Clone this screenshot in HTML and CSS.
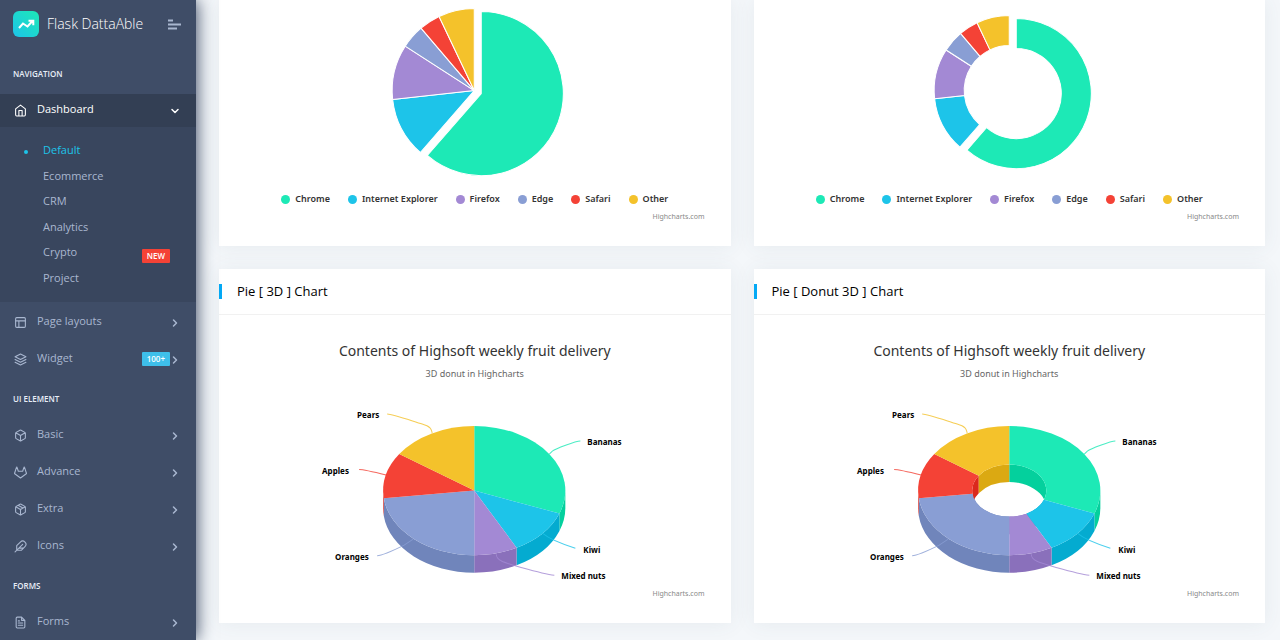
FILE: index.html
```html
<!DOCTYPE html>
<html lang="en">
<head>
<meta charset="utf-8">
<title>Flask DattaAble</title>
<link rel="stylesheet" href="styles.css">
</head>
<body>
<svg class="defs" aria-hidden="true">
  <symbol id="chev" viewBox="0 0 24 24"><path d="M9 18l6-6-6-6"/></symbol>
  <symbol id="down" viewBox="0 0 24 24"><path d="M6 9l6 6 6-6"/></symbol>
  <symbol id="home" viewBox="0 0 24 24"><path d="M3 9l9-7 9 7v11a2 2 0 0 1-2 2H5a2 2 0 0 1-2-2zM9 22V12h6v10"/></symbol>
  <symbol id="layout" viewBox="0 0 24 24"><rect x="3" y="3" width="18" height="18" rx="2"/><path d="M3 9h18M9 21V9"/></symbol>
  <symbol id="layers" viewBox="0 0 24 24"><path d="M12 2L2 7l10 5 10-5zM2 17l10 5 10-5M2 12l10 5 10-5"/></symbol>
  <symbol id="box" viewBox="0 0 24 24"><path d="M21 16V8a2 2 0 0 0-1-1.73l-7-4a2 2 0 0 0-2 0l-7 4A2 2 0 0 0 3 8v8a2 2 0 0 0 1 1.73l7 4a2 2 0 0 0 2 0l7-4A2 2 0 0 0 21 16zM3.3 7L12 12l8.700-5M12 22V12"/></symbol>
  <symbol id="gitlab" viewBox="0 0 24 24"><path d="M22.650 14.390L12 22.130 1.350 14.390a.84.84 0 0 1-.3-.94l1.220-3.780 2.440-7.510a.42.42 0 0 1 .82 0l2.440 7.490h8.060l2.440-7.490a.42.42 0 0 1 .82 0l2.440 7.510L23 13.450a.84.84 0 0 1-.35.940z"/></symbol>
  <symbol id="package" viewBox="0 0 24 24"><path d="M16.500 9.400L7.500 4.200M21 16V8a2 2 0 0 0-1-1.730l-7-4a2 2 0 0 0-2 0l-7 4A2 2 0 0 0 3 8v8a2 2 0 0 0 1 1.730l7 4a2 2 0 0 0 2 0l7-4A2 2 0 0 0 21 16zM3.300 7L12 12l8.700-5M12 22V12"/></symbol>
  <symbol id="feather" viewBox="0 0 24 24"><path d="M20.240 12.240a6 6 0 0 0-8.490-8.490L5 10.500V19h8.500zM16 8L2 22M17.500 15H9"/></symbol>
  <symbol id="file" viewBox="0 0 24 24"><path d="M14 2H6a2 2 0 0 0-2 2v16a2 2 0 0 0 2 2h12a2 2 0 0 0 2-2V8zM14 2v6h6M16 13H8M16 17H8M10 9H8"/></symbol>
  <symbol id="links" viewBox="237 400 475 187">
    <path stroke="#f4c22b" d="M387 414C392 414 412 421 422 424S431 430 432 433"/>
    <path stroke="#1de9b6" d="M580 441C575 441 555 449 552 451L549 454"/>
    <path stroke="#f44236" d="M359 469.500C364 469.500 378 473 386 475"/>
    <path stroke="#899ed4" d="M377 555.500C382 555.500 398 548 404 545L413 539"/>
    <path stroke="#1dc4e9" d="M542 533C548 538 562 544 575 548"/>
    <path stroke="#a389d4" d="M496 554C496 560 502 562 520 567S545 574 554 575"/>
  </symbol>
</svg>

<aside class="sidebar">
  <header class="brand">
    <a class="brand-link" href="#">
      <svg class="logo" viewBox="0 0 26 26"><defs><linearGradient id="lg" x1="0" y1="1" x2="1" y2="0"><stop offset="0" stop-color="#1dc4e9"/><stop offset="1" stop-color="#1de9b6"/></linearGradient></defs><rect width="26" height="26" rx="6" fill="url(#lg)"/><path d="M6 17l4-4.500 4.500 3 5.500-6M15.500 9.800h4.800v4.400" fill="none" stroke="#fff" stroke-width="2"/></svg>
      <span>Flask DattaAble</span>
    </a>
    <button class="toggle" aria-label="Toggle menu"><svg viewBox="0 0 13 11"><path d="M0 1.500h5M0 5.500h13M0 9.500h9"/></svg></button>
  </header>
  <nav>
    <h2 class="caption">NAVIGATION</h2>
    <div class="item open">
      <a class="link active" href="#"><svg class="icon"><use href="#home"/></svg><span class="label">Dashboard</span><svg class="chev"><use href="#down"/></svg></a>
      <ul class="submenu">
        <li><a class="current" href="#">Default</a></li>
        <li><a href="#">Ecommerce</a></li>
        <li><a href="#">CRM</a></li>
        <li><a href="#">Analytics</a></li>
        <li><a href="#">Crypto<span class="badge red">NEW</span></a></li>
        <li><a href="#">Project</a></li>
      </ul>
    </div>
    <div class="item"><a class="link" href="#"><svg class="icon"><use href="#layout"/></svg><span class="label">Page layouts</span><svg class="chev"><use href="#chev"/></svg></a></div>
    <div class="item"><a class="link" href="#"><svg class="icon"><use href="#layers"/></svg><span class="label">Widget</span><span class="badge blue">100+</span><svg class="chev"><use href="#chev"/></svg></a></div>
    <h2 class="caption">UI ELEMENT</h2>
    <div class="item"><a class="link" href="#"><svg class="icon"><use href="#box"/></svg><span class="label">Basic</span><svg class="chev"><use href="#chev"/></svg></a></div>
    <div class="item"><a class="link" href="#"><svg class="icon"><use href="#gitlab"/></svg><span class="label">Advance</span><svg class="chev"><use href="#chev"/></svg></a></div>
    <div class="item"><a class="link" href="#"><svg class="icon"><use href="#package"/></svg><span class="label">Extra</span><svg class="chev"><use href="#chev"/></svg></a></div>
    <div class="item"><a class="link" href="#"><svg class="icon"><use href="#feather"/></svg><span class="label">Icons</span><svg class="chev"><use href="#chev"/></svg></a></div>
    <h2 class="caption">FORMS</h2>
    <div class="item"><a class="link" href="#"><svg class="icon"><use href="#file"/></svg><span class="label">Forms</span><svg class="chev"><use href="#chev"/></svg></a></div>
  </nav>
</aside>

<main class="cards">
  <section class="card">
    <div class="body flat">
      <svg class="chart" viewBox="237 0 475 190" data-chart="pie"></svg>
      <ul class="legend"><li class="c1">Chrome</li><li class="c2">Internet Explorer</li><li class="c3">Firefox</li><li class="c4">Edge</li><li class="c5">Safari</li><li class="c6">Other</li></ul>
      <a class="credits" href="#">Highcharts.com</a>
    </div>
  </section>
  <section class="card">
    <div class="body flat">
      <svg class="chart" viewBox="237 0 475 190" data-chart="donut"></svg>
      <ul class="legend"><li class="c1">Chrome</li><li class="c2">Internet Explorer</li><li class="c3">Firefox</li><li class="c4">Edge</li><li class="c5">Safari</li><li class="c6">Other</li></ul>
      <a class="credits" href="#">Highcharts.com</a>
    </div>
  </section>
  <section class="card">
    <header class="head"><h5>Pie [ 3D ] Chart</h5></header>
    <div class="body">
      <h3 class="title">Contents of Highsoft weekly fruit delivery</h3>
      <p class="subtitle">3D donut in Highcharts</p>
      <svg class="chart" viewBox="237 400 475 187">
        <g data-chart="pie3d"></g>
        <use class="connectors" href="#links" x="237" y="400" width="475" height="187"/>
        <g class="labels"><text x="357" y="418">Pears</text><text x="587" y="445">Bananas</text><text x="322" y="474">Apples</text><text x="335" y="560">Oranges</text><text x="583" y="553">Kiwi</text><text x="561" y="579">Mixed nuts</text></g>
      </svg>
      <a class="credits" href="#">Highcharts.com</a>
    </div>
  </section>
  <section class="card">
    <header class="head"><h5>Pie [ Donut 3D ] Chart</h5></header>
    <div class="body">
      <h3 class="title">Contents of Highsoft weekly fruit delivery</h3>
      <p class="subtitle">3D donut in Highcharts</p>
      <svg class="chart" viewBox="237 400 475 187">
        <g data-chart="donut3d"></g>
        <use class="connectors" href="#links" x="237" y="400" width="475" height="187"/>
        <g class="labels"><text x="357" y="418">Pears</text><text x="587" y="445">Bananas</text><text x="322" y="474">Apples</text><text x="335" y="560">Oranges</text><text x="583" y="553">Kiwi</text><text x="561" y="579">Mixed nuts</text></g>
      </svg>
      <a class="credits" href="#">Highcharts.com</a>
    </div>
  </section>
</main>
<script src="charts.js"></script>
</body>
</html>
```

FILE: styles.css
```css
* { box-sizing: border-box; }
body { margin: 0; display: flex; align-items: stretch; min-height: 100vh; background: #f4f7fa; font-family: "Open Sans", sans-serif; color: #000; }
a { color: inherit; text-decoration: none; }
ul { list-style: none; margin: 0; padding: 0; }
h2, h3, h5, p { margin: 0; font-weight: 400; }
.defs { display: none; }

.sidebar { flex: 0 0 196px; height: 100vh; overflow: visible; background: #3f4d67; color: #a9b7d0; box-shadow: 1px 0 16px 0 #3f4d67; z-index: 1; }
.brand { display: flex; align-items: center; justify-content: space-between; height: 48px; margin-bottom: 5px; padding: 0 15px 0 13px; }
.brand-link { display: flex; align-items: center; gap: 8px; color: #fff; font-size: 14px; line-height: 18px; white-space: nowrap; font-weight: 300; }
.logo { width: 26px; height: 26px; }
.toggle { border: 0; padding: 0; background: none; display: flex; }
.toggle svg { width: 13px; height: 11px; stroke: #a9b7d0; stroke-width: 2; }
.caption { padding: 13px 13px 10px; font-size: 8px; line-height: 16px; font-weight: 600; color: #e8edf7; }
.item { padding: 2px 0; }
.link { display: flex; align-items: center; height: 33px; padding: 0 15px 0 14px; font-size: 11px; }
.icon { width: 13px; height: 13px; margin-right: 10px; }
.chev { width: 12px; height: 12px; }
.icon, .chev { fill: none; stroke: currentColor; stroke-width: 2; stroke-linecap: round; stroke-linejoin: round; }
.chev { stroke-width: 3; }
.label { flex: 1; padding-bottom: 4px; }
.active { background: #333f54; color: #fff; }
.submenu { display: flex; flex-direction: column; justify-content: space-between; min-height: 175px; background: #39465e; padding: 10px 0 12px; }
.submenu a { display: flex; align-items: center; justify-content: space-between; height: 25px; padding: 0 26px 0 43px; font-size: 11px; position: relative; }
.current { color: #1dc4e9; }
.current::before { content: ""; position: absolute; left: 24px; top: 13px; width: 4px; height: 4px; border-radius: 50%; background: #1dc4e9; }
.badge { height: 14px; padding: 0 5px; border-radius: 1px; font-size: 8px; line-height: 14px; font-weight: 600; color: #fff; }
.red { background: #f44236; margin-top: 8px; }
.blue { background: #3ebfea; margin: 0 -1px 2px 0; }

.cards { flex: 1; min-width: 0; display: grid; grid-template-columns: 1fr 1fr; gap: 23px; align-content: start; padding: 0 15px 17px 23px; }
.card { background: #fff; box-shadow: 0 1px 20px 0 rgba(69, 90, 100, .08); }
.head { display: flex; align-items: center; height: 46px; border-bottom: 1px solid #f1f1f1; }
.head h5 { padding-left: 15px; border-left: 3px solid #04a9f5; font-size: 13px; line-height: 15px; }
.body { display: flex; flex-direction: column; padding: 26px 18px 22px; font-family: "Noto Sans", sans-serif; }
.flat { padding-top: 0; }
.title { text-align: center; font-size: 14px; line-height: 20px; color: #333; }
.subtitle { text-align: center; font-size: 9px; line-height: 14px; padding-top: 6px; height: 39px; color: #666; }
.chart { width: 100%; display: block; }
.legend { display: flex; justify-content: center; gap: 18px; margin-bottom: 2px; font-size: 9px; line-height: 18px; font-weight: 600; color: #333; }
.legend li { display: flex; align-items: center; gap: 5px; white-space: nowrap; }
.legend li::before { content: ""; width: 9px; height: 9px; border-radius: 50%; background: var(--c); }
.c1 { --c: #1de9b6; }
.c2 { --c: #1dc4e9; }
.c3 { --c: #a389d4; }
.c4 { --c: #899ed4; }
.c5 { --c: #f44236; }
.c6 { --c: #f4c22b; }
.credits { align-self: flex-end; padding-right: 8px; font-size: 7px; line-height: 14px; color: #888; }
.connectors { fill: none; stroke-width: 1; opacity: .8; }
.labels { font-size: 8px; font-weight: 700; fill: #000; }
```

FILE: charts.js
```js
const NS = "http://www.w3.org/2000/svg";

function add(parent, d, fill, stroke) {
  const p = document.createElementNS(NS, "path");
  p.setAttribute("d", d);
  p.setAttribute("fill", fill);
  if (stroke) {
    p.setAttribute("stroke", stroke);
    p.setAttribute("stroke-linejoin", "round");
  }
  parent.appendChild(p);
}

function point(cx, cy, rx, ry, deg) {
  const a = deg * Math.PI / 180;
  return (cx + rx * Math.sin(a)).toFixed(2) + " " + (cy - ry * Math.cos(a)).toFixed(2);
}

function slice(cx, cy, rx, ry, ix, iy, from, to) {
  const big = to - from > 180 ? 1 : 0;
  const outer = `M${point(cx, cy, rx, ry, from)}A${rx} ${ry} 0 ${big} 1 ${point(cx, cy, rx, ry, to)}`;
  return ix
    ? `${outer}L${point(cx, cy, ix, iy, to)}A${ix} ${iy} 0 ${big} 0 ${point(cx, cy, ix, iy, from)}Z`
    : `${outer}L${cx} ${cy}Z`;
}

function wall(cx, cy, rx, ry, depth, from, to) {
  return `M${point(cx, cy, rx, ry, from)}A${rx} ${ry} 0 0 1 ${point(cx, cy, rx, ry, to)}` +
    `L${point(cx, cy + depth, rx, ry, to)}A${rx} ${ry} 0 0 0 ${point(cx, cy + depth, rx, ry, from)}Z`;
}

const browsers = [
  [61.41, "#1de9b6"], [11.84, "#1dc4e9"], [10.85, "#a389d4"],
  [4.67, "#899ed4"], [4.18, "#f44236"], [7.05, "#f4c22b"]
];
const fruit = [
  [8, "#1de9b6", "#04d09d"], [3, "#1dc4e9", "#04abd0"], [2, "#a389d4", "#8a70bb"],
  [6, "#899ed4", "#7085bb"], [3, "#f44236", "#db291d"], [4, "#f4c22b", "#dba912"]
];

function angles(data) {
  const total = data.reduce((sum, row) => sum + row[0], 0);
  let at = 0;
  return data.map(([value, color, dark]) => {
    const from = at;
    at += value / total * 360;
    return { from, to: at, color, dark };
  });
}

function flat(name, radius, hole) {
  const node = document.querySelector(`[data-chart=${name}]`);
  angles(browsers).forEach((s, i) => {
    const cx = i ? 474 : 481, cy = i ? 90.5 : 93.5;
    add(node, slice(cx, cy, radius, radius, hole, hole, s.from, s.to), s.color, "#fff");
  });
}

function solid(name, ix, iy) {
  const node = document.querySelector(`[data-chart=${name}]`);
  const cx = 474, cy = 490.5, rx = 91, ry = 64.5, depth = 17.5;
  const parts = angles(fruit);
  parts.forEach(s => {
    if (ix) add(node, wall(cx, cy, ix, iy, depth, s.from, s.to), s.dark);
    const from = Math.max(s.from, 90), to = Math.min(s.to, 270);
    if (to > from) add(node, wall(cx, cy, rx, ry, depth, from, to), s.dark);
  });
  parts.forEach(s => add(node, slice(cx, cy, rx, ry, ix, iy, s.from, s.to), s.color));
}

flat("pie", 82, 0);
flat("donut", 75, 45);
solid("pie3d", 0, 0);
solid("donut3d", 37, 26);
```
